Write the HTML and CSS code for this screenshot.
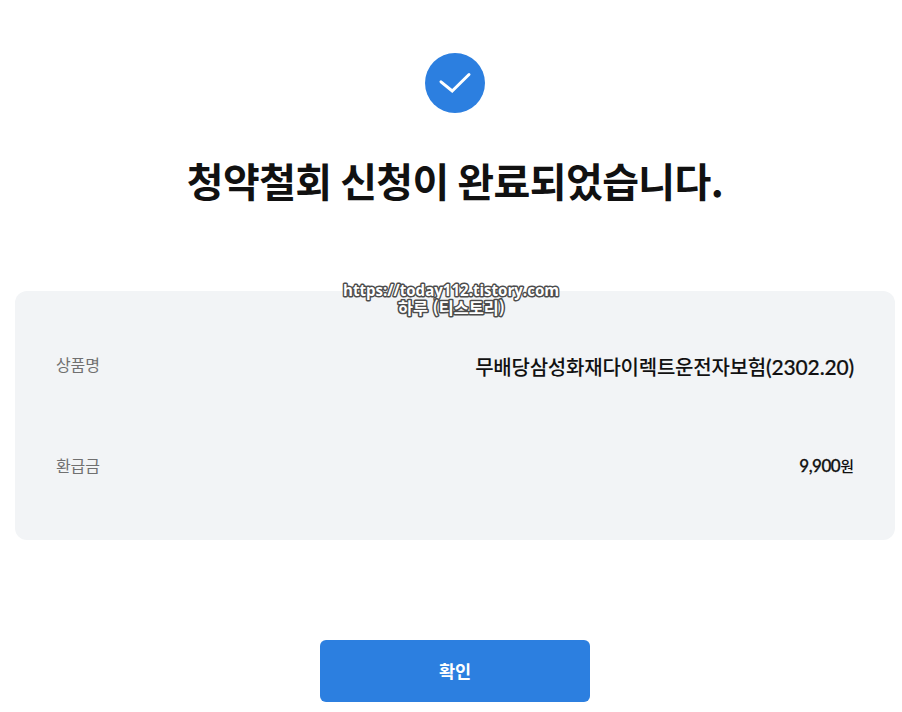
FILE: index.html
```html
<!DOCTYPE html>
<html lang="ko">
<head>
<meta charset="utf-8">
<title>청약철회 신청 완료</title>
<link rel="stylesheet" href="styles.css">
</head>
<body>
<main class="complete">
  <svg class="check" viewBox="0 0 60 60" aria-hidden="true"><circle cx="30" cy="30" r="30"/><path d="M16 28.8L27.2 38L44 21.5"/></svg>
  <h1 class="title">청약철회 신청이 완료되었습니다.</h1>
  <section class="summary">
    <div class="watermark">
      <svg class="mark" width="240" height="40">
        <text class="mark-url" x="12" y="18" textLength="216" lengthAdjust="spacingAndGlyphs">https://today112.tistory.com</text>
        <text class="mark-name" x="67" y="36" textLength="107" lengthAdjust="spacingAndGlyphs">하루 (티스토리)</text>
      </svg>
    </div>
    <dl class="details">
      <div class="row"><dt>상품명</dt><dd class="product">무배당삼성화재다이렉트운전자보험<span class="code">(2302.20)</span></dd></div>
      <div class="row"><dt>환급금</dt><dd class="refund"><span class="amount">9,900</span>원</dd></div>
    </dl>
  </section>
  <button class="confirm" type="button">확인</button>
</main>
</body>
</html>
```
FILE: styles.css
```css
* { box-sizing: border-box; }
body { margin: 0; background: #fff; color: #111; font-family: Lato, "Noto Sans CJK KR", sans-serif; overflow: hidden; }
.complete { width: 880px; height: 712px; margin-left: 15px; padding-top: 53px; display: flex; flex-direction: column; align-items: center; }
.check { width: 60px; height: 60px; flex: none; }
.check circle { fill: #2c7fe0; }
.check path { fill: none; stroke: #fff; stroke-width: 3; stroke-linecap: round; }
.title { margin: 37px 0 81px; height: 60px; line-height: 60px; font-family: "Noto Sans CJK KR", sans-serif; font-size: 40px; font-weight: 700; letter-spacing: -.6px; word-spacing: -2px; white-space: nowrap; }
.summary { position: relative; width: 880px; height: 249px; flex: none; padding: 50px 41px; border-radius: 12px; background: #f2f4f6; }
.watermark { position: absolute; left: 316px; top: -13px; }
.mark { display: block; overflow: visible; }
.mark text { font-weight: 700; fill: #fff; stroke: #4c4c4c; stroke-width: 3px; stroke-linejoin: round; paint-order: stroke; }
.mark-url { font-family: "Open Sans", sans-serif; font-size: 16px; }
.mark-name { font-family: "Noto Sans CJK KR", sans-serif; font-size: 16px; }
.details { margin: 0; display: flex; flex-direction: column; gap: 50px; }
.row { height: 50px; display: flex; justify-content: space-between; align-items: center; white-space: nowrap; }
dt { margin-top: -4px; color: #707070; font-size: 16px; letter-spacing: -.1px; }
.row + .row dt { margin-top: -2px; }
dd { margin: 0; font-weight: 500; }
.product { font-size: 20px; letter-spacing: -.22px; }
.code { font-size: 21px; letter-spacing: -.15px; -webkit-text-stroke: .2px #111; }
.refund { margin-top: -2px; font-size: 15px; }
.amount { font-size: 17px; letter-spacing: -.5px; -webkit-text-stroke: .3px #111; }
.confirm { width: 270px; height: 62px; flex: none; margin-top: 100px; padding: 0 0 2px; border: 0; border-radius: 6px; background: #2c7fe0; color: #fff; font: 700 17.5px "Noto Sans CJK KR", sans-serif; }
```
